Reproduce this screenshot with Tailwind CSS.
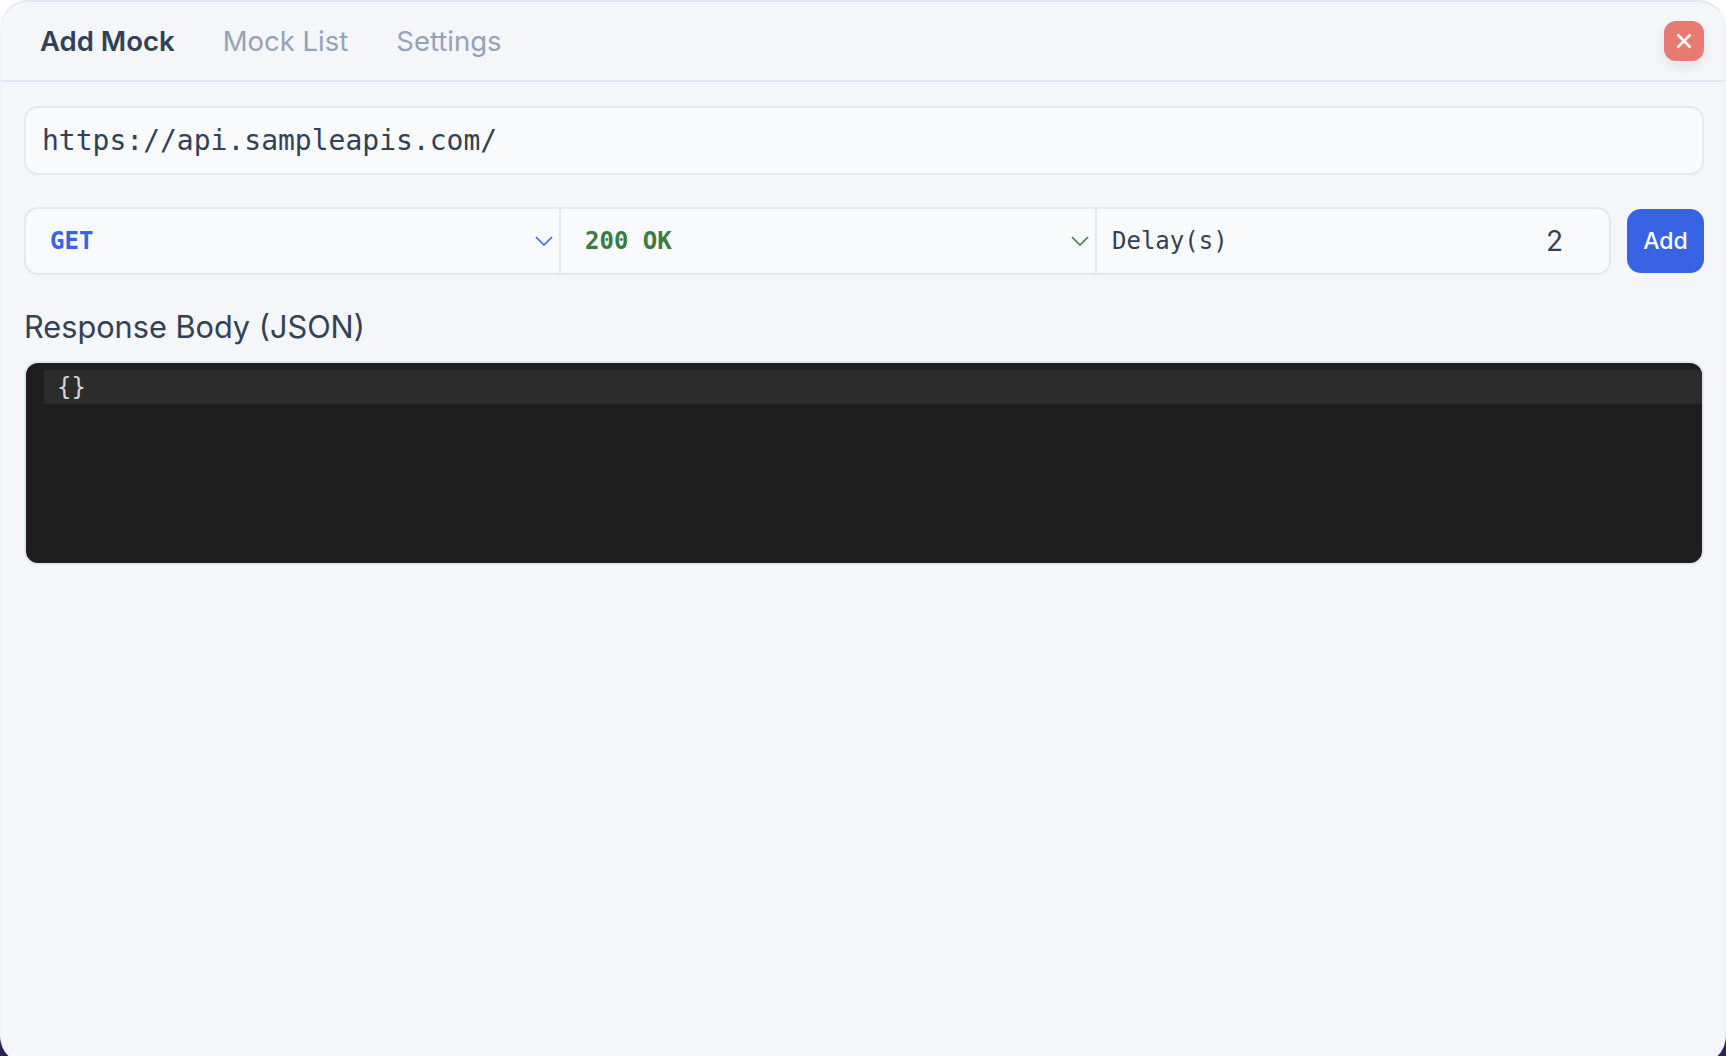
<!DOCTYPE html>
<html lang="en">
<head>
  <meta charset="UTF-8">
  <title>Add Mock</title>
  <script src="https://cdn.jsdelivr.net/npm/@tailwindcss/browser@4"></script>
</head>
<body class="h-screen overflow-hidden bg-[linear-gradient(to_bottom,#ffffff_50%,#2d1f57_50%)] font-['Inter',sans-serif]">
  <div class="h-[1064px] flex flex-col bg-[#f4f6fa] rounded-[28px] border-t-2 border-x border-t-[#e2e8f0] border-x-[#eef1f6]">
    <!-- tabs -->
    <div class="h-[79.5px] shrink-0 flex items-center pl-[39px] pr-[21px] border-b-2 border-[#e2e8f0]">
      <div class="flex gap-[48px] text-[27.5px] leading-none pt-[1px]">
        <span class="font-semibold text-[#334155]">Add Mock</span>
        <span class="text-[#94a3b8]">Mock List</span>
        <span class="text-[#94a3b8]">Settings</span>
      </div>
      <button class="ml-auto w-10 h-10 rounded-xl bg-[#e87a74] flex items-center justify-center shadow-[0_6px_14px_rgba(0,0,0,0.08)]">
        <svg class="w-[18px] h-[18px]" viewBox="0 0 18 18" fill="none" stroke="#ffffff" stroke-width="2.6"><path d="M2.5 2.5l13 13M15.5 2.5l-13 13"/></svg>
      </button>
    </div>

    <div class="pl-[23px] pr-[21px] pt-[24px] flex flex-col">
      <input type="text" value="https://api.sampleapis.com/" class="h-[69px] w-full rounded-[14px] border-2 border-[#e2e8f0] bg-[#f9fafc] px-[16px] text-[28px] text-[#334155] font-['DejaVu_Sans_Mono',monospace] outline-none">

      <!-- method / status / delay -->
      <div class="mt-[32px] flex gap-[16px]">
        <div class="flex-1 h-[68px] flex rounded-[14px] border-2 border-[#e2e8f0] bg-[#f9fafc] font-['DejaVu_Sans_Mono',monospace] text-[24px]">
          <div class="w-[535px] shrink-0 flex items-center justify-between pl-[24px] pr-[6px] border-r-2 border-[#e2e8f0] font-bold text-[#3864e4]">
            <span>GET</span>
            <svg class="w-[18px] h-[10px]" viewBox="0 0 18 10" fill="none" stroke="#3864e4" stroke-width="1.6"><path d="M1 1l8 8 8-8"/></svg>
          </div>
          <div class="w-[536px] shrink-0 flex items-center justify-between pl-[24px] pr-[6px] border-r-2 border-[#e2e8f0] font-bold text-[#3a7d44]">
            <span>200 OK</span>
            <svg class="w-[18px] h-[10px]" viewBox="0 0 18 10" fill="none" stroke="#3a7d44" stroke-width="1.6"><path d="M1 1l8 8 8-8"/></svg>
          </div>
          <div class="flex-1 flex items-center justify-between pl-[15px] pr-[46px] text-[#334155]">
            <span>Delay(s)</span>
            <span class="font-['Inter',sans-serif] text-[28px]">2</span>
          </div>
        </div>
        <button class="w-[77px] h-[64px] mt-[2px] pt-[2px] rounded-[14px] bg-[#3864e4] text-white text-[23px] font-medium">Add</button>
      </div>

      <label class="mt-[34px] text-[30.7px] leading-[36px] text-[#334155]">Response Body (JSON)</label>

      <!-- editor -->
      <div class="mt-[16px] h-[204px] rounded-[14px] border-2 border-[#e2e8f0] bg-[#1e1e1e] pt-[7px] pl-[18px] overflow-hidden">
        <div class="h-[34px] bg-[#2c2c2c] pl-[13px] flex items-center font-['DejaVu_Sans_Mono',monospace] text-[24px] text-[#d4d4d4]">{}</div>
      </div>
    </div>
  </div>
</body>
</html>
